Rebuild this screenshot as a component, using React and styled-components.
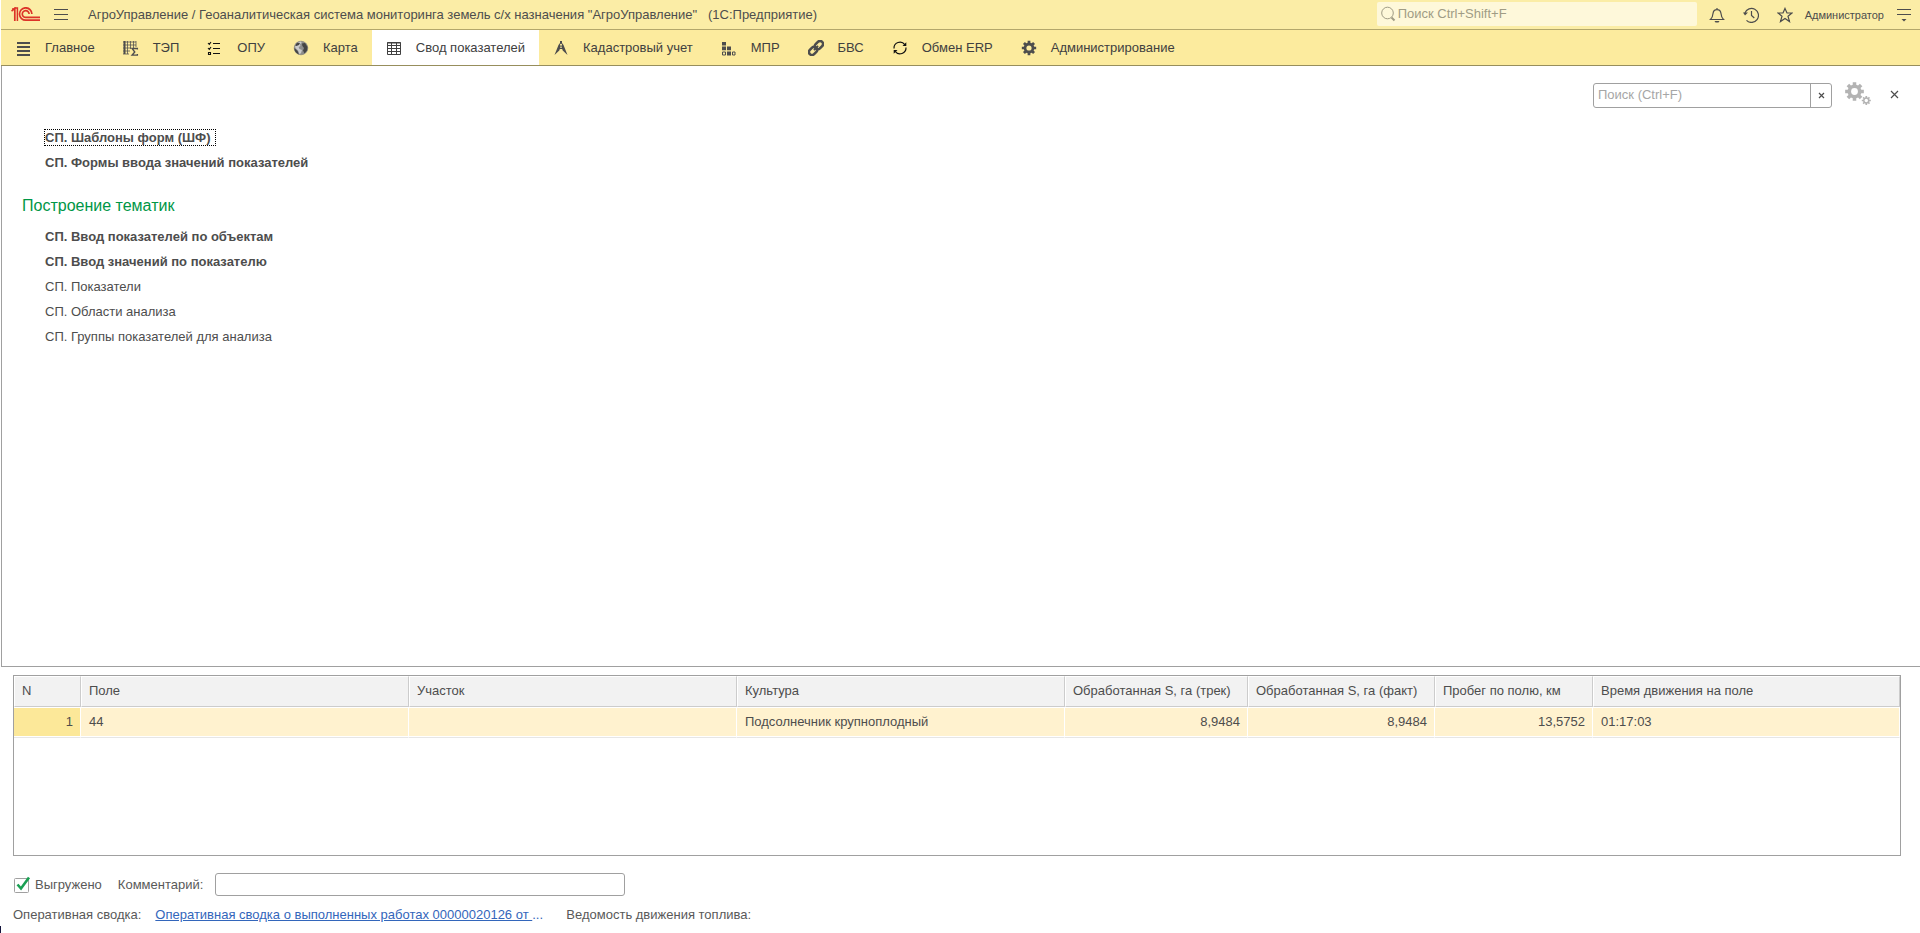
import React, { useState } from 'react';
import styled, { createGlobalStyle, ThemeProvider } from 'styled-components';

const theme = {
  font: "'Liberation Sans', Arial, sans-serif",
  colors: {
    title: '#fbeda6',
    nav: '#fceb9e',
    line: '#b3a76b',
    navLine: '#978e5c',
    border: '#a0a0a0',
    text: '#4d4d4d',
    muted: '#a6a6a6',
    green: '#009646',
    link: '#3366bb'
  }
};

const GlobalStyle = createGlobalStyle`
  * {
    box-sizing: border-box;
  }

  body {
    margin: 0;
    background: #fff;
  }

  button, input {
    font: inherit;
    color: inherit;
  }
`;

const Page = styled.div`
  position: relative;
  display: flex;
  flex-direction: column;
  min-height: 100vh;
  padding-left: 1px;
  font: 13px/16px ${({ theme }) => theme.font};
  color: ${({ theme }) => theme.colors.text};
`;

const Caret = styled.span`
  position: absolute;
  left: 0;
  bottom: 0;
  width: 1px;
  height: 7px;
  background: #14143c;
`;

const IconButton = styled.button`
  display: flex;
  align-items: center;
  justify-content: center;
  flex: none;
  background: none;
  border: 0;
  padding: 0;
  cursor: pointer;
`;

const TitleBar = styled.header`
  display: flex;
  align-items: center;
  height: 30px;
  padding: 0 8px 0 10px;
  background: ${({ theme }) => theme.colors.title};
  border-bottom: 1px solid ${({ theme }) => theme.colors.line};
`;

const MenuButton = styled(IconButton)`
  margin: 0 20px 0 13px;
`;

const Title = styled.h1`
  flex: 1;
  margin: 0;
  font-size: 13px;
  font-weight: normal;
  white-space: pre;
`;

const GlobalSearch = styled.label`
  display: flex;
  align-items: center;
  width: 320px;
  height: 24px;
  margin: 0 12px 1px 0;
  padding-left: 3px;
  background: #fef8da;
  border-radius: 2px;

  input {
    flex: 1;
    min-width: 0;
    padding: 0 0 0 2px;
    border: 0;
    outline: 0;
    background: none;
  }

  input::placeholder {
    color: #a09c85;
    opacity: 1;
  }
`;

const Tools = styled.div`
  display: flex;
  align-items: center;
  gap: 18px;
`;

const User = styled.a`
  margin: 0 12px 0 12px;
  font-size: 11px;
  color: inherit;
  text-decoration: none;
`;

const Nav = styled.nav`
  display: flex;
  height: 36px;
  background: ${({ theme }) => theme.colors.nav};
  border-bottom: 1px solid ${({ theme }) => theme.colors.navLine};
`;

const NavItem = styled.button`
  display: flex;
  align-items: center;
  gap: 14px;
  padding: 0 14px;
  border: 0;
  background: ${({ $active }) => ($active ? '#fff' : 'none')};
  color: #404040;
  white-space: nowrap;
  cursor: pointer;
`;

const Panel = styled.main`
  flex: 1;
  position: relative;
  padding: 59px 16px 24px 20px;
  border: 1px solid ${({ theme }) => theme.colors.border};
  border-width: 0 0 1px 1px;
`;

const PanelTools = styled.div`
  position: absolute;
  top: 16px;
  right: 21px;
  display: flex;
  align-items: center;
`;

const PanelSearch = styled.div`
  display: flex;
  width: 239px;
  height: 25px;
  border: 1px solid ${({ theme }) => theme.colors.border};
  border-radius: 3px;

  input {
    flex: 1;
    min-width: 0;
    padding: 0 4px;
    border: 0;
    outline: 0;
    background: none;
  }

  input::placeholder {
    color: ${({ theme }) => theme.colors.muted};
    opacity: 1;
  }

  button {
    width: 21px;
    border-left: 1px solid ${({ theme }) => theme.colors.border};
  }
`;

const GearsButton = styled(IconButton)`
  margin: 0 19px 2px 13px;
`;

const CloseButton = styled(IconButton)`
  margin-bottom: 2px;
`;

const Heading = styled.h2`
  margin: 21px 0 8px;
  font-size: 16px;
  line-height: 20px;
  font-weight: normal;
  color: ${({ theme }) => theme.colors.green};
`;

const Commands = styled.ul`
  display: flex;
  flex-direction: column;
  align-items: flex-start;
  margin: 0;
  padding: 0 0 0 22px;
  list-style: none;
`;

const Command = styled.li`
  display: flex;
  align-items: center;
  height: 25px;

  a {
    padding: 0 4px 0 0;
    border: 1px dotted ${({ $focused }) => ($focused ? '#000' : 'transparent')};
    color: inherit;
    font-weight: ${({ $bold }) => ($bold ? 'bold' : 'normal')};
    line-height: 15px;
    text-decoration: none;
  }
`;

const Footer = styled.section`
  padding: 8px 19px 10px 12px;
`;

const TableBox = styled.div`
  height: 181px;
  border: 1px solid ${({ theme }) => theme.colors.border};
`;

const Table = styled.table`
  width: 100%;
  table-layout: fixed;
  border-collapse: separate;
  border-spacing: 0;
  white-space: nowrap;

  th, td {
    padding: 0 7px 2px;
    font-weight: normal;
    text-align: left;
  }

  th {
    height: 31px;
    background: #f2f2f2;
    border: 1px solid #fff;
    border-right-color: #ccc;
    border-bottom-color: #ccc;
  }

  td {
    height: 31px;
    padding-left: 8px;
    background: #fff2cf;
    background-clip: padding-box;
    border: 1px solid #fff;
    border-left: 0;
    border-bottom: 1px solid #e6e6e6;
    box-shadow: inset 0 -1px #fff;
  }

  td.num {
    text-align: right;
  }

  td.current {
    background-color: #fce899;
  }
`;

const Form = styled.div`
  display: flex;
  align-items: center;
  height: 23px;
  margin-top: 17px;
  color: #595959;
`;

const Check = styled.label`
  display: flex;
  align-items: center;
  gap: 4px;
  margin-right: 16px;
  cursor: pointer;

  input {
    position: absolute;
    opacity: 0;
  }
`;

const CommentInput = styled.input`
  width: 410px;
  height: 23px;
  margin-left: 12px;
  padding: 0 4px;
  border: 1px solid ${({ theme }) => theme.colors.border};
  border-radius: 3px;
  outline: 0;
`;

const Links = styled.div`
  display: flex;
  margin-top: 11px;
  color: #595959;
  white-space: pre;
`;

const ReportLink = styled.div`
  min-width: 399px;
  margin: 0 12px 0 14px;
  color: ${({ theme }) => theme.colors.link};

  a {
    color: inherit;
  }
`;

const Icon = ({ size = 16, width, children }) => (
  <svg
    width={width || size}
    height={size}
    viewBox={`0 0 ${width || size} ${size}`}
    fill="none"
    stroke="#4d4d4d"
    aria-hidden="true"
  >
    {children}
  </svg>
);

const gearPath = (cx, cy, outer, inner, teeth = 8) => {
  const step = (Math.PI * 2) / teeth;
  const points = [];
  for (let i = 0; i < teeth; i++) {
    [[-0.32, inner], [-0.24, outer], [0.24, outer], [0.32, inner]].forEach(([shift, r]) => {
      const a = (i + shift) * step - Math.PI / 2;
      points.push(`${(cx + r * Math.cos(a)).toFixed(2)} ${(cy + r * Math.sin(a)).toFixed(2)}`);
    });
  }
  return `M${points.join('L')}Z`;
};

const Logo = () => (
  <svg width="30" height="15" viewBox="0 0 30 15" fill="none" stroke="#dc3328" strokeWidth="1.7" aria-label="1С">
    <path d="M0.5 4.2L3.8 1.4V14" />
    <path d="M1 1.9H3.2L4 1H6.4V14" strokeWidth="1.5" />
    <path d="M20.9 7A6.2 6.2 0 1 0 15 13.2H29" />
    <path d="M18.1 7A3.4 3.4 0 1 0 15 10.4H29" />
  </svg>
);

const icons = {
  main: (
    <Icon>
      <path d="M2 3H15M2 7H15M2 11H15M2 15H15" strokeWidth="2" />
    </Icon>
  ),
  tep: (
    <Icon>
      <path d="M0 2H13M0 5H13M0 8H8M0 11H7M0 14H6M4.5 1V14M7.5 1V9M10.5 1V8M13 1V7" strokeWidth="1" opacity=".75" />
      <path d="M1.5 1V14" strokeWidth="2" />
      <path d="M14.4 9.5V8.5H9L11.8 12L9 15.2H14.4V14" strokeWidth="1.3" />
    </Icon>
  ),
  opu: (
    <Icon>
      <path d="M6 3.5H13M6 8.5H13M6 13.5H13" stroke="#111" strokeWidth="1.2" />
      <path d="M1 3L2.3 4.4L4 2M1 8L2.3 9.4L4 7M1.5 12.5H3.5V14.5H1.5Z" stroke="#111" strokeWidth="1.1" />
    </Icon>
  ),
  map: (
    <Icon>
      <circle cx="8" cy="8" r="6.8" fill="#8c8c8c" stroke="#777" strokeWidth=".6" />
      <path d="M2 5L4 2.5L8 1.5L8.7 3L7 4L7.4 6L5.6 7L6.5 9L9 10L8 13L6.6 14.2L5 10.6L2.4 8Z" fill="#ccc" stroke="none" />
      <path d="M4 2.6L7 3L6 5L3.5 6L2 5.4ZM9 3.5L12 3L14.5 7L14 10.5L11.5 13.5L10 10.5L11 8L9.4 6Z" fill="#444" stroke="none" />
      <path d="M1.4 8L4.6 11L5.8 14.4A6.8 6.8 0 0 1 1.4 8Z" fill="#444" stroke="none" />
    </Icon>
  ),
  summary: (
    <Icon>
      <path d="M1.5 2.5H14.5V14.5H1.5ZM1 5.5H15M1 8.5H15M1 11.5H15M5.5 3V15M10.5 3V15M1 3H15" stroke="#404040" />
    </Icon>
  ),
  cadastre: (
    <Icon>
      <path d="M7 1H9V3L10.5 5L14.5 15L9.7 10.5L8 5.5L6.3 10.5L1.5 15L5.5 5L7 3Z" fill="#4d4d4d" stroke="none" />
      <path d="M5.5 8.5H10.5" />
      <circle cx="8" cy="4.8" r="1" fill="#fceb9e" stroke="none" />
    </Icon>
  ),
  mpr: (
    <Icon>
      <path d="M1 2h4v3.6H1zM1 6.6h4v3.6H1zM6 6.6h4v3.6H6z" fill="#4d4d4d" stroke="none" />
      <path d="M1.5 12h3v3h-3zM11.5 12h2.5v3h-2.5z" />
      <path d="M6 11.5h4v4H6z" fill="#4d4d4d" stroke="none" />
    </Icon>
  ),
  bvs: (
    <Icon>
      <g transform="rotate(-45 8 8)" strokeWidth="2.6">
        <rect x="-0.7" y="5" width="9.2" height="6" rx="3" />
        <rect x="7.5" y="5" width="9.2" height="6" rx="3" />
        <path d="M5 8H11" strokeWidth="1.6" />
      </g>
    </Icon>
  ),
  erp: (
    <Icon>
      <path d="M2 8.5A6 6 0 0 1 12.8 4.6M14 7.5A6 6 0 0 1 3.2 11.4" stroke="#111" strokeWidth="1.2" />
      <path d="M14.3 2.2V6H10.5ZM1.7 13.8V10H5.5Z" fill="#111" stroke="none" />
    </Icon>
  ),
  admin: (
    <Icon>
      <path d={gearPath(8, 8, 7.3, 5.4)} fill="#4d4d4d" stroke="none" />
      <circle cx="8" cy="8" r="2.6" fill="#fceb9e" stroke="none" />
    </Icon>
  )
};

const Cross = ({ size }) => (
  <Icon size={size}>
    <path d={`M1 1L${size - 1} ${size - 1}M${size - 1} 1L1 ${size - 1}`} strokeWidth="1.2" />
  </Icon>
);

const sections = [
  ['main', 'Главное'],
  ['tep', 'ТЭП'],
  ['opu', 'ОПУ'],
  ['map', 'Карта'],
  ['summary', 'Свод показателей'],
  ['cadastre', 'Кадастровый учет'],
  ['mpr', 'МПР'],
  ['bvs', 'БВС'],
  ['erp', 'Обмен ERP'],
  ['admin', 'Администрирование']
];

const forms = [
  { text: 'СП. Шаблоны форм (ШФ)', bold: true, focused: true },
  { text: 'СП. Формы ввода значений показателей', bold: true }
];

const themes = [
  { text: 'СП. Ввод показателей по объектам', bold: true },
  { text: 'СП. Ввод значений по показателю', bold: true },
  { text: 'СП. Показатели' },
  { text: 'СП. Области анализа' },
  { text: 'СП. Группы показателей для анализа' }
];

const columns = [
  { title: 'N', width: 67, value: '1', className: 'num current' },
  { title: 'Поле', value: '44' },
  { title: 'Участок', value: '' },
  { title: 'Культура', value: 'Подсолнечник крупноплодный' },
  { title: 'Обработанная S, га (трек)', width: 183, value: '8,9484', className: 'num' },
  { title: 'Обработанная S, га (факт)', width: 187, value: '8,9484', className: 'num' },
  { title: 'Пробег по полю, км', width: 158, value: '13,5752', className: 'num' },
  { title: 'Время движения на поле', width: 307, value: '01:17:03' }
];

const CommandList = ({ items }) => (
  <Commands>
    {items.map(({ text, bold, focused }) => (
      <Command key={text} $bold={bold} $focused={focused}>
        <a href="#">{text}</a>
      </Command>
    ))}
  </Commands>
);

const App = () => {
  const [active, setActive] = useState('summary');
  const [uploaded, setUploaded] = useState(true);

  return (
    <ThemeProvider theme={theme}>
      <GlobalStyle />
      <Page>
        <TitleBar>
          <Logo />
          <MenuButton aria-label="Меню">
            <Icon size={14}>
              <path d="M0 1.5H14M0 6.5H14M0 11.5H14" />
            </Icon>
          </MenuButton>
          <Title>{'АгроУправление / Геоаналитическая система мониторинга земель с/х назначения "АгроУправление"   (1С:Предприятие)'}</Title>
          <GlobalSearch>
            <Icon>
              <circle cx="7.5" cy="7" r="5.8" stroke="#a09c85" />
              <path d="M11.5 11.5L14.5 14.5" stroke="#a09c85" strokeWidth="2" />
            </Icon>
            <input type="search" placeholder="Поиск Ctrl+Shift+F" aria-label="Поиск" />
          </GlobalSearch>
          <Tools>
            <IconButton aria-label="Оповещения">
              <Icon>
                <path d="M1.5 12.5H14.5C12.5 10.8 12.3 9.5 12 6.5C11.7 4 10.3 2.6 8 2.6S4.3 4 4 6.5C3.7 9.5 3.5 10.8 1.5 12.5ZM8 2.6V1" strokeWidth="1.2" />
                <path d="M5.5 14H10.5L9.5 15.5H6.5Z" fill="#4d4d4d" stroke="none" />
              </Icon>
            </IconButton>
            <IconButton aria-label="История">
              <Icon>
                <path d="M1.9 6A7 7 0 1 1 3.5 13.4M8.5 4V8.5L11.3 11" strokeWidth="1.2" />
                <path d="M0 5.5H5L2 8.5Z" fill="#4d4d4d" stroke="none" />
              </Icon>
            </IconButton>
            <IconButton aria-label="Избранное">
              <Icon>
                <path d="M8 1.4L10 6H15L11 9.2L12.5 14.6L8 11.5L3.5 14.6L5 9.2L1 6H6Z" strokeWidth="1.2" />
              </Icon>
            </IconButton>
          </Tools>
          <User href="#">Администратор</User>
          <IconButton aria-label="Сервис">
            <Icon>
              <path d="M1 2.5H15M1 7.5H15" />
              <path d="M5.5 12H10.5L8 14.5Z" fill="#4d4d4d" stroke="none" />
            </Icon>
          </IconButton>
        </TitleBar>

        <Nav>
          {sections.map(([name, label]) => (
            <NavItem key={name} $active={active === name} onClick={() => setActive(name)}>
              {icons[name]}
              {label}
            </NavItem>
          ))}
        </Nav>

        <Panel>
          <PanelTools>
            <PanelSearch>
              <input placeholder="Поиск (Ctrl+F)" aria-label="Поиск в разделе" />
              <IconButton aria-label="Очистить">
                <Cross size={7} />
              </IconButton>
            </PanelSearch>
            <GearsButton aria-label="Настройки">
              <svg width="26" height="24" viewBox="0 0 26 24" fill="#b3b3b3" aria-hidden="true">
                <path d={gearPath(9.5, 9.5, 9.5, 7)} />
                <circle cx="9.5" cy="9.5" r="3.4" fill="#fff" />
                <path d={gearPath(21.3, 18.5, 4.6, 3.3)} />
                <circle cx="21.3" cy="18.5" r="1.7" fill="#fff" />
              </svg>
            </GearsButton>
            <CloseButton aria-label="Закрыть">
              <Cross size={9} />
            </CloseButton>
          </PanelTools>
          <CommandList items={forms} />
          <Heading>Построение тематик</Heading>
          <CommandList items={themes} />
        </Panel>

        <Footer>
          <TableBox>
            <Table>
              <colgroup>
                {columns.map(({ title, width }) => <col key={title} width={width} />)}
              </colgroup>
              <thead>
                <tr>
                  {columns.map(({ title }) => <th key={title} scope="col">{title}</th>)}
                </tr>
              </thead>
              <tbody>
                <tr>
                  {columns.map(({ title, value, className }) => (
                    <td key={title} className={className}>{value}</td>
                  ))}
                </tr>
              </tbody>
            </Table>
          </TableBox>
          <Form>
            <Check>
              <input type="checkbox" checked={uploaded} onChange={() => setUploaded(!uploaded)} />
              <Icon size={18}>
                <rect x="1.5" y="2.5" width="14" height="14" rx="1" stroke="#a0a0a0" fill="#fff" />
                {uploaded && <path d="M4.5 8.5L8 12.5L16 1.5" stroke="#1aa053" strokeWidth="2.6" />}
              </Icon>
              Выгружено
            </Check>
            <label htmlFor="comment">Комментарий:</label>
            <CommentInput id="comment" type="text" />
          </Form>
          <Links>
            <span>Оперативная сводка:</span>
            <ReportLink>
              <a href="#">{'Оперативная сводка о выполненных работах 00000020126 от '}</a>
              ...
            </ReportLink>
            <span>Ведомость движения топлива:</span>
          </Links>
        </Footer>
        <Caret />
      </Page>
    </ThemeProvider>
  );
};

export default App;
